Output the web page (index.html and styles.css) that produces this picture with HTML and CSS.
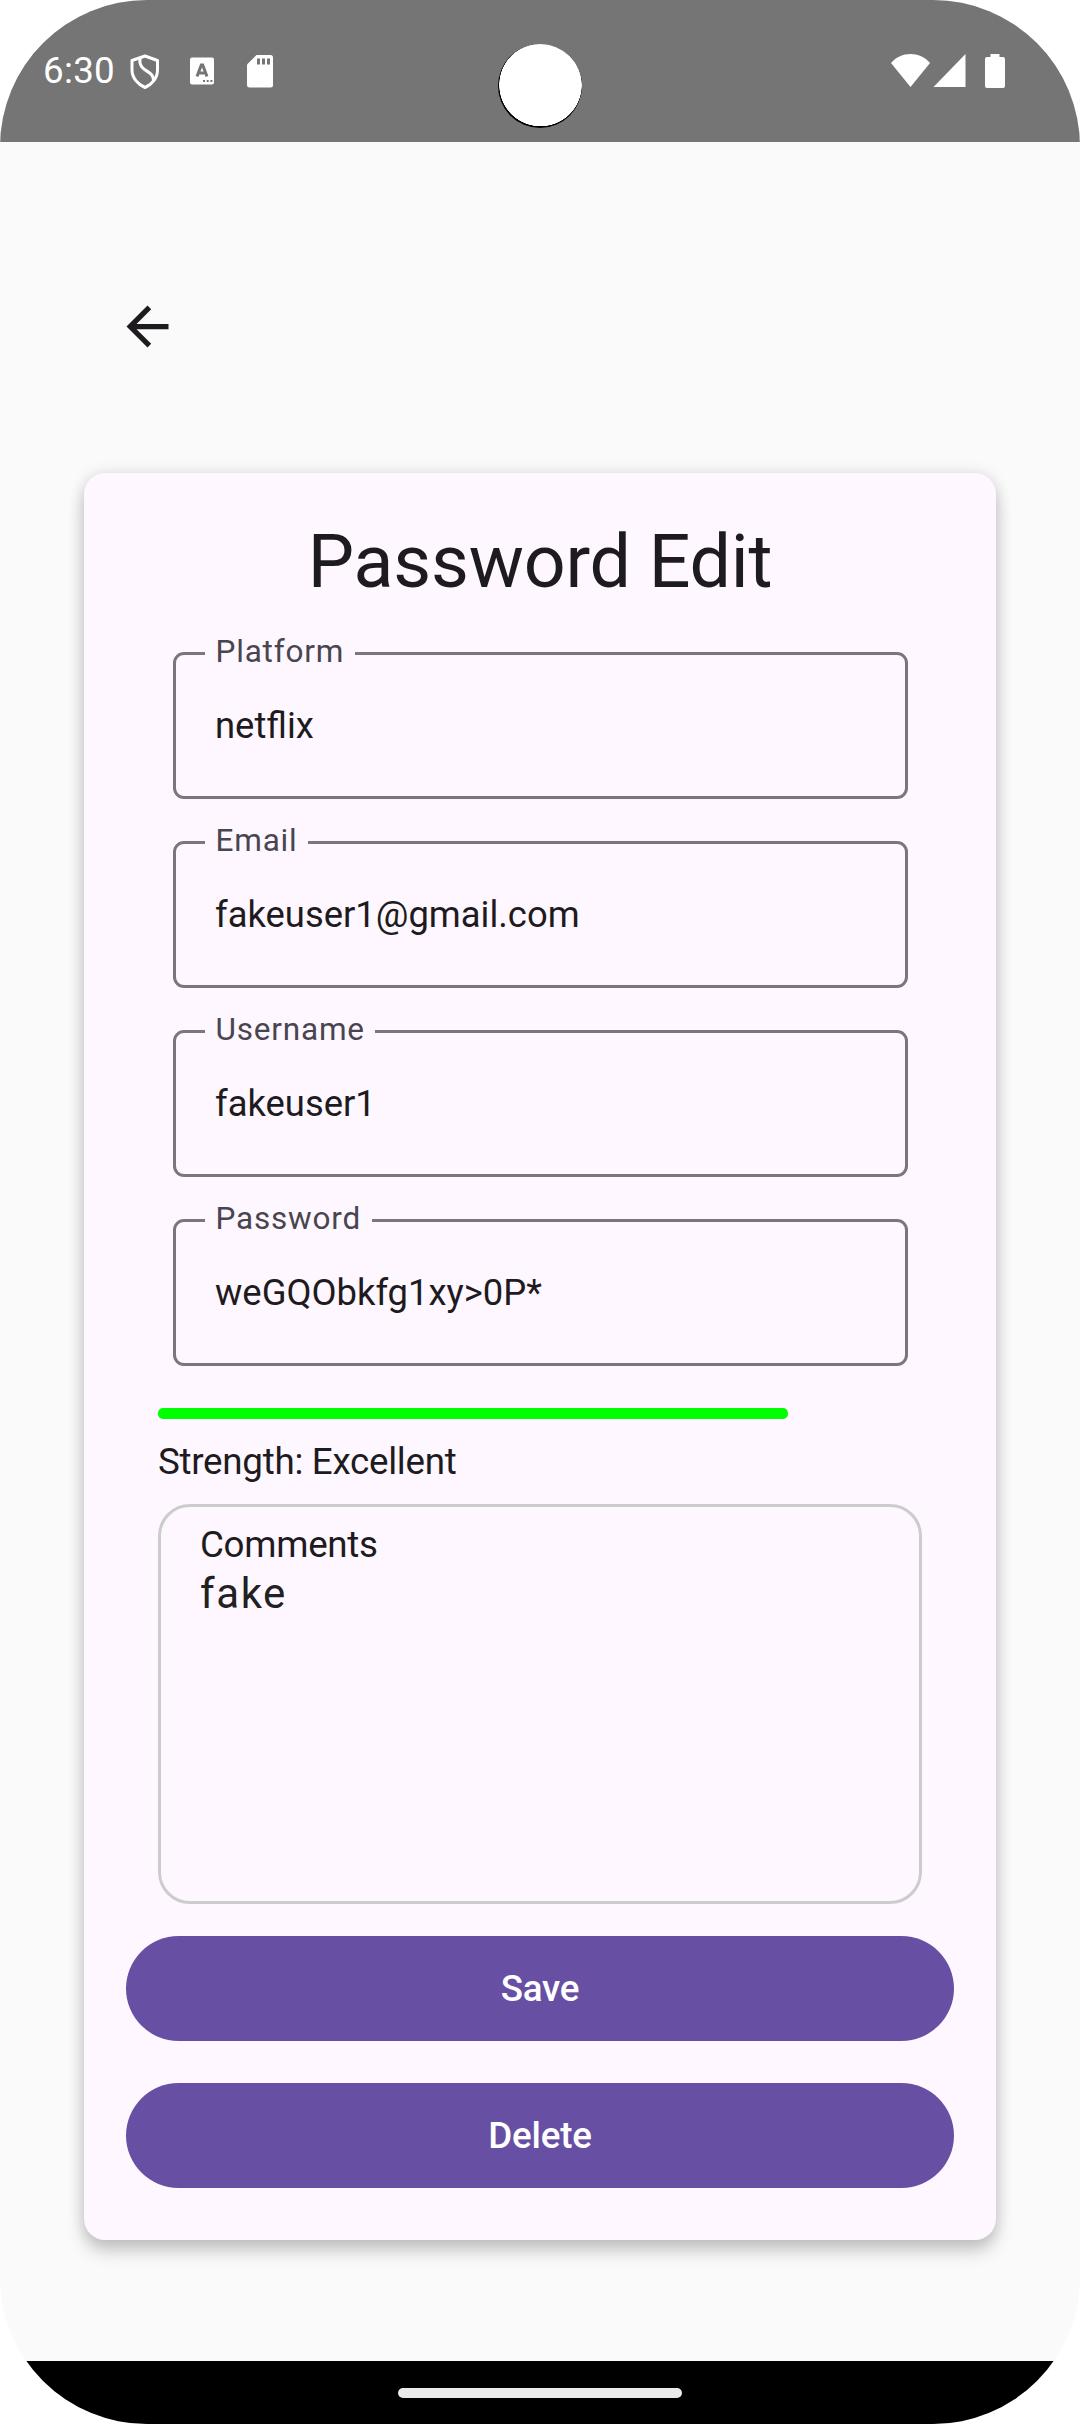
FILE: index.html
```html
<!DOCTYPE html>
<html lang="en">
<head>
<meta charset="utf-8">
<title>Password Edit</title>
<link rel="stylesheet" href="styles.css">
</head>
<body>
<div class="screen">
  <header class="status-bar">
    <span class="clock">6:30</span>
    <svg class="icon-shield" width="30" height="36" viewBox="0 0 30 36" fill="none" stroke="#fff" stroke-width="3"><path d="M15 2 L27.5 6.5 V16 C27.5 24 22 30.5 15 33.5 C8 30.5 2 24 2 16 V6.5 Z" stroke-linejoin="round"/><path d="M10 4 C8 19 24 15 23.500 27"/></svg>
    <svg class="icon-letter" width="24" height="28" viewBox="0 0 24 28"><rect y=".5" width="24" height="27" rx="2" fill="#fff"/><path d="M7 19.500 L11.300 8 H12.700 L17 19.500 M8.500 16 H15.500" fill="none" stroke="#757575" stroke-width="3"/><path d="M13 23h2v2h-2z M16.700 23h2v2h-2z M20.400 23h2v2h-2z" fill="#757575"/></svg>
    <svg class="icon-sd" width="26" height="33" viewBox="0 0 26 33"><path d="M9.500 0 H23.500 Q26 0 26 2.500 V30 Q26 32.500 23.500 32.500 H2.500 Q0 32.500 0 30 V9.500 Z" fill="#fff"/><path d="M10 3.500h3v6h-3z M15 3.500h3v6h-3z M20 3.500h3v6h-3z" fill="#757575"/></svg>
    <span class="camera"></span>
    <svg class="icon-wifi" width="39" height="33" viewBox="0 0 39 33"><path d="M0 9 C10 -3 29 -3 39 9 L19.500 33 Z" fill="#fff"/></svg>
    <svg class="icon-signal" width="33" height="33" viewBox="0 0 33 33"><path d="M32.500 0 V33 H.5 Z" fill="#fff"/></svg>
    <svg class="icon-battery" width="20" height="34" viewBox="0 0 20 34"><path d="M5.500 0 H14.500 V3 H18 Q20 3 20 5 V32 Q20 34 18 34 H2 Q0 34 0 32 V5 Q0 3 2 3 H5.500 Z" fill="#fff"/></svg>
  </header>
  <main class="content">
    <button class="back" aria-label="Back"><svg width="63" height="63" viewBox="0 0 24 24"><path d="M20 11H7.830l5.590-5.590L12 4l-8 8 8 8 1.410-1.410L7.830 13H20v-2z" fill="#1d1b20"/></svg></button>
    <section class="card">
      <h1 class="title">Password Edit</h1>
      <div class="fields">
        <div class="field"><span class="label">Platform</span><span class="value">netflix</span></div>
        <div class="field"><span class="label">Email</span><span class="value">fakeuser1@gmail.com</span></div>
        <div class="field"><span class="label">Username</span><span class="value">fakeuser1</span></div>
        <div class="field"><span class="label">Password</span><span class="value">weGQObkfg1xy&gt;0P*</span></div>
      </div>
      <div class="strength-bar"></div>
      <p class="strength">Strength: Excellent</p>
      <div class="comments">
        <span class="comments-label">Comments</span>
        <span class="comments-text">fake</span>
      </div>
      <div class="actions">
        <button class="btn">Save</button>
        <button class="btn">Delete</button>
      </div>
    </section>
  </main>
  <footer class="nav-bar"><span class="handle"></span></footer>
</div>
</body>
</html>
```

FILE: styles.css
```css
* { box-sizing: border-box; }
body { margin: 0; background: #fff; font-family: Roboto, sans-serif; color: #1d1b20; }
button { border: 0; padding: 0; background: none; font: inherit; }
svg { display: block; flex: none; }

.screen { width: 1080px; height: 2424px; display: flex; flex-direction: column; overflow: hidden; border-radius: 147px; background: #fafafa; }

.status-bar { position: relative; height: 142px; padding: 0 75px 0 43px; display: flex; align-items: flex-start; background: #757575; color: #fff; }
.clock { width: 87px; margin-top: 49px; font-size: 36.75px; line-height: 44px; letter-spacing: .3px; }
.icon-shield { margin-top: 54px; }
.icon-letter { margin: 57px 0 0 30px; }
.icon-sd { margin: 55px 0 0 33px; }
.icon-wifi { margin: 54px 0 0 auto; }
.icon-signal { margin: 54px 0 0 3px; }
.icon-battery { margin: 54px 0 0 19px; }
.camera { position: absolute; left: 498px; top: 44px; width: 84px; height: 84px; border-radius: 50%; background: radial-gradient(circle at 42.5px 41px, #fff 41px, #000 41.500px); }

.content { flex: 1; padding: 153px 84px 0; }
.back { display: block; margin-left: 32px; width: 63px; height: 63px; }

.card { margin-top: 115px; height: 1767px; padding: 42px 42px 0; border-radius: 21px; background: #fef7ff; box-shadow: 0 11px 17px rgba(0,0,0,.2), 0 0 15px rgba(0,0,0,.11); }
.title { margin: 0; font-size: 73.5px; line-height: 94px; font-weight: 400; letter-spacing: -.22px; text-align: center; }

.fields { margin: 43px 46px 0 47px; display: grid; gap: 42px; }
.field { position: relative; height: 147px; padding: 49px 0 0 39px; border: 3px solid #7c757e; border-radius: 11px; }
.label { position: absolute; left: 29px; top: -22px; padding: 0 10.5px; background: #fef7ff; color: #49454f; font-size: 31.5px; line-height: 38px; letter-spacing: .8px; }
.value { display: block; font-size: 36.4px; line-height: 44px; }

.strength-bar { margin: 42px 0 0 32px; width: 630px; height: 11px; border-radius: 5px; background: #0f0; }
.strength { margin: 21px 0 0 32px; font-size: 36.75px; line-height: 44px; letter-spacing: -.28px; }

.comments { margin: 20px 32px 0; height: 400px; padding: 16px 39px; display: flex; flex-direction: column; border: 3px solid #ccc; border-radius: 32px; }
.comments-label { font-size: 36.75px; line-height: 44px; letter-spacing: -.3px; }
.comments-text { margin-top: 1px; font-size: 42px; line-height: 52px; letter-spacing: 1.6px; color: #212121; }

.actions { margin-top: 32px; display: grid; gap: 42px; }
.btn { height: 105px; border-radius: 53px; background: #6750a4; color: #fff; font-size: 36.75px; line-height: 44px; font-weight: 500; letter-spacing: -.2px; }

.nav-bar { height: 63px; display: flex; justify-content: center; padding-top: 27px; background: #000; }
.handle { width: 284px; height: 10px; border-radius: 5px; background: #ebebeb; }
```
